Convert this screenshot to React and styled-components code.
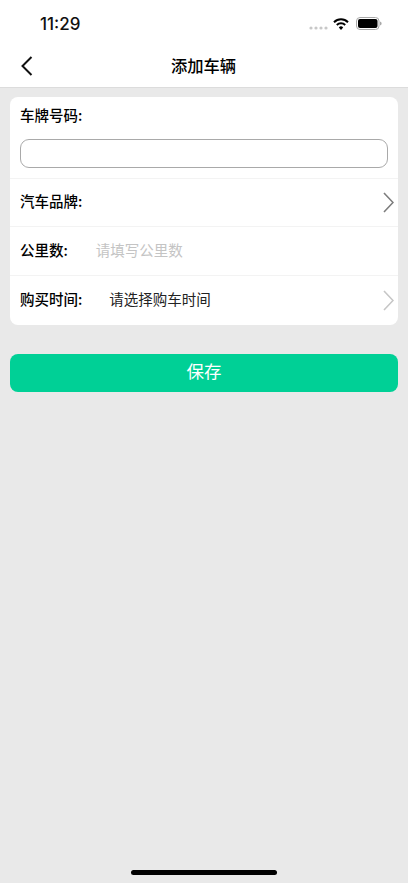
import React from "react";
import styled, { createGlobalStyle } from "styled-components";

const GlobalStyle = createGlobalStyle`
  html, body {
    margin: 0;
    padding: 0;
    background: #e9e9e9;
  }
  * {
    box-sizing: border-box;
  }
`;

const Page = styled.div`
  width: 408px;
  height: 883px;
  position: relative;
  overflow: hidden;
  display: flex;
  flex-direction: column;
  background: #e9e9e9;
  font-family: "Noto Sans CJK SC", "Noto Sans", sans-serif;
  color: #000;
`;

const Header = styled.div`
  background: #fff;
  border-bottom: 1px solid #dcdcdc;
  height: 88px;
  flex: none;
`;

const StatusBar = styled.div`
  height: 44px;
  padding: 3px 26px 0 40px;
  display: flex;
  align-items: center;
  justify-content: space-between;
`;

const Clock = styled.span`
  font-family: Inter, "Liberation Sans", sans-serif;
  font-size: 17px;
  font-weight: 500;
  color: #111;
`;

const StatusIcons = styled.div`
  display: flex;
  align-items: center;
  gap: 7px;
`;

const SignalDots = styled.svg`
  margin: 8px -2px 0 0;
`;

const NavBar = styled.div`
  height: 43px;
  padding: 0 20px;
  display: flex;
  align-items: center;
  justify-content: space-between;
`;

const NavTitle = styled.h1`
  margin: 0 1px 1px 0;
  font-size: 16.3px;
  font-weight: 500;
  line-height: 22px;
`;

const NavSpacer = styled.div`
  width: 14px;
`;

const Content = styled.div`
  padding: 9px 10px 0;
  display: flex;
  flex-direction: column;
  gap: 29px;
`;

const Card = styled.div`
  background: #fff;
  border-radius: 8px;
  overflow: hidden;
`;

const Row = styled.div`
  height: ${({ $height }) => $height}px;
  padding: 0 4px 0 10px;
  display: flex;
  align-items: center;
  border-top: 1px solid #f3f3f3;
`;

const PlateRow = styled.div`
  height: 81px;
  padding: 8px 10px 0;
  display: flex;
  flex-direction: column;
`;

const Label = styled.span`
  font-size: 14.5px;
  font-weight: 500;
  line-height: 20px;
  white-space: nowrap;
  margin-bottom: 3px;
`;

const PlateInput = styled.input`
  display: block;
  width: 100%;
  height: 29px;
  margin-top: 11px;
  border: 1px solid #a9a9a9;
  border-radius: 9px;
  background: #fff;
  outline: none;
`;

const Placeholder = styled.span`
  margin: 0 0 3px 28px;
  font-size: 14.5px;
  line-height: 20px;
  color: #c4c4c4;
`;

const Value = styled.span`
  margin: 0 0 3px 27px;
  font-size: 14.5px;
  line-height: 20px;
  color: #222;
  flex: 1;
`;

const Push = styled.div`
  flex: 1;
`;

const SaveButton = styled.button`
  height: 38px;
  border: none;
  border-radius: 8px;
  background: #00d096;
  color: #fff;
  font-family: inherit;
  font-size: 17.5px;
  line-height: 34px;
  padding: 0 0 4px;
`;

const HomeIndicator = styled.div`
  position: absolute;
  left: 131px;
  bottom: 8px;
  width: 146px;
  height: 5px;
  border-radius: 3px;
  background: #000;
`;

const Signal = () => (
  <SignalDots width="19" height="4" viewBox="0 0 19 4">
    <g fill="#c8c8c8">
      <circle cx="2" cy="2" r="1.6" />
      <circle cx="7" cy="2" r="1.6" />
      <circle cx="12" cy="2" r="1.6" />
      <circle cx="17" cy="2" r="1.6" />
    </g>
  </SignalDots>
);

const Wifi = () => (
  <svg width="16" height="12" viewBox="0 0 16 12" fill="none" stroke="#000" strokeWidth="2">
    <path d="M1 4.2 A10 10 0 0 1 15 4.2" />
    <path d="M3.8 7 A6 6 0 0 1 12.2 7" />
    <path d="M8 12 L5.8 9.4 A3.2 3.2 0 0 1 10.2 9.4 Z" fill="#000" stroke="none" />
  </svg>
);

const Battery = () => (
  <svg width="26" height="13" viewBox="0 0 26 13">
    <rect x="0.5" y="0.5" width="22.5" height="12" rx="3.5" fill="none" stroke="#a8a8a8" />
    <rect x="2" y="2" width="19.5" height="9" rx="2" fill="#000" />
    <path d="M24 4.5 C25.2 5 25.6 5.6 25.6 6.5 C25.6 7.4 25.2 8 24 8.5 Z" fill="#a8a8a8" />
  </svg>
);

const BackIcon = () => (
  <svg width="14" height="22" viewBox="0 0 14 22" fill="none" stroke="#111" strokeWidth="2">
    <path d="M11.5 2 L2.5 11 L11.5 20" />
  </svg>
);

const Chevron = ({ color }) => (
  <svg width="11" height="21" viewBox="0 0 11 21" fill="none" stroke={color} strokeWidth="1.6">
    <path d="M1 1 L10 10.5 L1 20" />
  </svg>
);

export default function App() {
  return (
    <Page>
      <GlobalStyle />
      <Header>
        <StatusBar>
          <Clock>11:29</Clock>
          <StatusIcons>
            <Signal />
            <Wifi />
            <Battery />
          </StatusIcons>
        </StatusBar>
        <NavBar>
          <BackIcon />
          <NavTitle>添加车辆</NavTitle>
          <NavSpacer />
        </NavBar>
      </Header>
      <Content>
        <Card>
          <PlateRow>
            <Label>车牌号码:</Label>
            <PlateInput />
          </PlateRow>
          <Row $height={48}>
            <Label>汽车品牌:</Label>
            <Push />
            <Chevron color="#7d7d7d" />
          </Row>
          <Row $height={49}>
            <Label>公里数:</Label>
            <Placeholder>请填写公里数</Placeholder>
          </Row>
          <Row $height={50}>
            <Label>购买时间:</Label>
            <Value>请选择购车时间</Value>
            <Chevron color="#c6c6c6" />
          </Row>
        </Card>
        <SaveButton>保存</SaveButton>
      </Content>
      <HomeIndicator />
    </Page>
  );
}
